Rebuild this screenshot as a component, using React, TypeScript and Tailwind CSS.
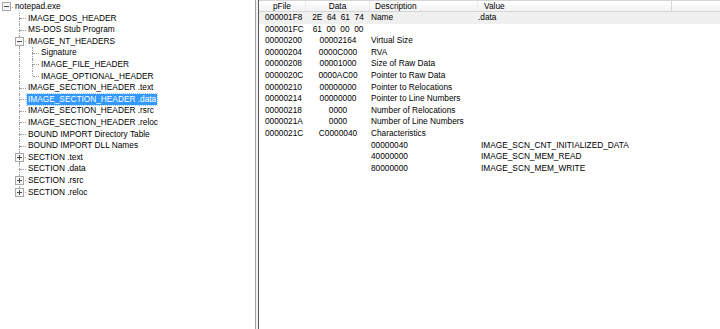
import React from 'react'

type Node = {
  label: string
  level: number
  box?: 'plus' | 'minus'
  last?: boolean
  selected?: boolean
}

const tree: Node[] = [
  { label: 'notepad.exe', level: 0, box: 'minus' },
  { label: 'IMAGE_DOS_HEADER', level: 1 },
  { label: 'MS-DOS Stub Program', level: 1 },
  { label: 'IMAGE_NT_HEADERS', level: 1, box: 'minus' },
  { label: 'Signature', level: 2 },
  { label: 'IMAGE_FILE_HEADER', level: 2 },
  { label: 'IMAGE_OPTIONAL_HEADER', level: 2, last: true },
  { label: 'IMAGE_SECTION_HEADER .text', level: 1 },
  { label: 'IMAGE_SECTION_HEADER .data', level: 1, selected: true },
  { label: 'IMAGE_SECTION_HEADER .rsrc', level: 1 },
  { label: 'IMAGE_SECTION_HEADER .reloc', level: 1 },
  { label: 'BOUND IMPORT Directory Table', level: 1 },
  { label: 'BOUND IMPORT DLL Names', level: 1 },
  { label: 'SECTION .text', level: 1, box: 'plus' },
  { label: 'SECTION .data', level: 1 },
  { label: 'SECTION .rsrc', level: 1, box: 'plus' },
  { label: 'SECTION .reloc', level: 1, box: 'plus', last: true },
]

// rows of the structure view: pFile, data, description, value
const rows: { off: string; data: string; desc: string; value: string; sub?: boolean }[] = [
  { off: '000001F8', data: '2E  64  61  74', desc: 'Name', value: '.data' },
  { off: '000001FC', data: '61  00  00  00', desc: '', value: '' },
  { off: '00000200', data: '00002164', desc: 'Virtual Size', value: '' },
  { off: '00000204', data: '0000C000', desc: 'RVA', value: '' },
  { off: '00000208', data: '00001000', desc: 'Size of Raw Data', value: '' },
  { off: '0000020C', data: '0000AC00', desc: 'Pointer to Raw Data', value: '' },
  { off: '00000210', data: '00000000', desc: 'Pointer to Relocations', value: '' },
  { off: '00000214', data: '00000000', desc: 'Pointer to Line Numbers', value: '' },
  { off: '00000218', data: '0000', desc: 'Number of Relocations', value: '' },
  { off: '0000021A', data: '0000', desc: 'Number of Line Numbers', value: '' },
  { off: '0000021C', data: 'C0000040', desc: 'Characteristics', value: '' },
  { off: '', data: '', desc: '00000040', value: 'IMAGE_SCN_CNT_INITIALIZED_DATA', sub: true },
  { off: '', data: '', desc: '40000000', value: 'IMAGE_SCN_MEM_READ', sub: true },
  { off: '', data: '', desc: '80000000', value: 'IMAGE_SCN_MEM_WRITE', sub: true },
]

const LINE = '#a0a0a0'

// one 13px connector column of the tree
function Guide({ kind, box, last }: { kind: 'pass' | 'junction' | 'root' | 'none'; box?: 'plus' | 'minus'; last?: boolean }) {
  const up = kind === 'pass' || kind === 'junction'
  const down = kind === 'pass' || (kind === 'junction' && !last)
  const right = kind === 'junction' || kind === 'root'
  return (
    <div className="relative w-[13px] h-[11.6px] shrink-0">
      {/* vertical dotted guide, drawn as two halves */}
      <div className="flex flex-col h-full w-[7px]">
        <div className={`flex-1 ${up ? 'border-r border-dotted border-[#a0a0a0]' : ''}`} />
        <div className={`flex-1 ${down ? 'border-r border-dotted border-[#a0a0a0]' : ''}`} />
      </div>
      {right && (
        <div className="absolute left-[7px] right-0 top-[5.5px] border-t border-dotted" style={{ borderColor: LINE }} />
      )}
      {box && (
        <svg width="9" height="9" viewBox="0 0 9 9" className="absolute left-[2px] top-[1.3px]">
          <rect x="0.5" y="0.5" width="8" height="8" fill="#f7f7f7" stroke="#a8a8a8" />
          <line x1="2" y1="4.5" x2="7" y2="4.5" stroke="#4a4a4a" />
          {box === 'plus' && <line x1="4.5" y1="2" x2="4.5" y2="7" stroke="#4a4a4a" />}
        </svg>
      )}
    </div>
  )
}

function TreeRow({ node }: { node: Node }) {
  const cells: React.ReactNode[] = []
  if (node.level === 0) {
    cells.push(<Guide key="r" kind="root" box={node.box} />)
  } else {
    cells.push(<Guide key="0" kind="none" />)
    for (let c = 1; c < node.level; c++) cells.push(<Guide key={c} kind="pass" />)
    cells.push(<Guide key="j" kind="junction" box={node.box} last={node.last} />)
  }
  return (
    <div className="flex h-[11.6px] items-center">
      {cells}
      <span
        className={
          node.selected
            ? 'ml-[1px] px-[1px] bg-[#3399ff] text-white outline outline-1 outline-dotted outline-[#99ccff] leading-[11px] whitespace-nowrap'
            : 'ml-[2px] leading-[11.6px] whitespace-nowrap'
        }
      >
        {node.label}
      </span>
    </div>
  )
}

export default function App() {
  return (
    <div className="flex h-[329px] w-[720px] overflow-hidden bg-white text-[8.3px] text-black font-['Liberation_Sans',Arial,sans-serif]">
      {/* Tree pane */}
      <div className="w-[255px] shrink-0 pt-[1px]">
        {tree.map((n, i) => (
          <TreeRow key={i} node={n} />
        ))}
      </div>

      {/* Splitter */}
      <div className="w-[1px] bg-[#a0a0a0]" />
      <div className="w-[2px] bg-[#f0f0f0]" />

      {/* Structure pane */}
      <div className="flex-1 border-l border-[#5a5a5a]">
        <div className="flex h-[12px] items-center border-t border-b border-[#d5d5d5] bg-gradient-to-b from-white to-[#f2f2f2] leading-[10px]">
          <div className="w-[47px] text-center border-r border-[#ececec]">pFile</div>
          <div className="w-[64px] text-center border-r border-[#ececec]">Data</div>
          <div className="w-[108px] pl-[5px] border-r border-[#ececec]">Description</div>
          <div className="w-[194px] pl-[6px] border-r border-[#d5d5d5]">Value</div>
          <div className="flex-1" />
        </div>
        {rows.map((r, i) => (
          <div key={i} className={`flex h-[11.6px] items-center leading-[11.6px] whitespace-pre ${i === 0 ? 'bg-[#f0f0f0]' : ''}`}>
            <div className="w-[47px] pl-[6px]">{r.off}</div>
            <div className="w-[64px] text-center">{r.data}</div>
            <div className="w-[108px] pl-[1px]">{r.desc}</div>
            <div className={`w-[194px] ${r.sub ? 'pl-[3px]' : 'pl-[0px]'}`}>{r.value}</div>
            <div className="flex-1" />
          </div>
        ))}
      </div>
    </div>
  )
}
